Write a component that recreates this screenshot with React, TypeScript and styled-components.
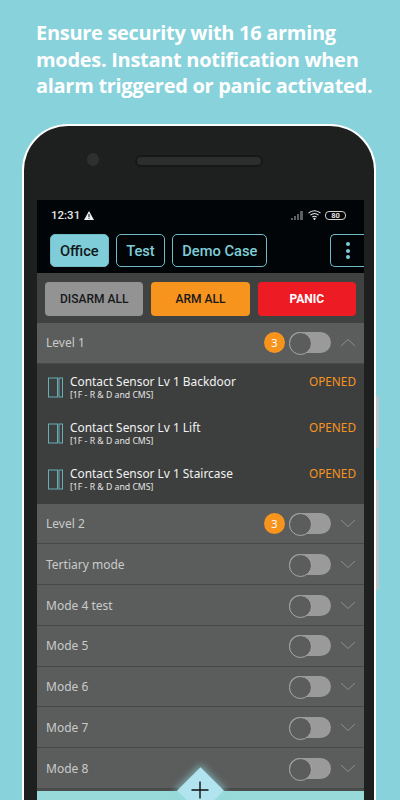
import React from 'react'
import styled, { createGlobalStyle } from 'styled-components'

const GlobalStyle = createGlobalStyle`
    html, body {
        margin: 0;
        padding: 0;
        background-color: #88d2dc;
    }
    * {
        box-sizing: border-box;
    }
`

const Page = styled.div`
    width: 400px;
    height: 800px;
    overflow: hidden;
    display: flex;
    flex-direction: column;
    background-color: #88d2dc;
`

const Headline = styled.h1`
    margin: 0;
    padding: 20px 0 24.5px 36px;
    font-family: "Open Sans", sans-serif;
    font-size: 20px;
    font-weight: 700;
    letter-spacing: -0.3px;
    line-height: 26.5px;
    color: #fff;
    white-space: nowrap;
`

const Phone = styled.div`
    position: relative;
    flex: 1;
    min-height: 0;
    width: 354px;
    margin-left: 22px;
    padding: 0 10px 0 13px;
    display: flex;
    flex-direction: column;
    background-color: #1e2020;
    border: 2px solid #fff;
    border-bottom: 0;
    border-radius: 46px 46px 0 0;
`

const SideKey = styled.div<{ $top: number; $height: number }>`
    position: absolute;
    right: -5px;
    top: ${(p) => p.$top}px;
    width: 3px;
    height: ${(p) => p.$height}px;
    background-color: #bcc6c9;
`

const Earpiece = styled.div`
    height: 74px;
    flex-shrink: 0;
    display: flex;
    align-items: flex-start;
    padding: 26px 0 0 50px;
    gap: 36px;
`

const Camera = styled.div`
    width: 12px;
    height: 13px;
    margin-top: 1px;
    border-radius: 50%;
    background-color: #2e3030;
`

const Speaker = styled.div`
    width: 128px;
    height: 12px;
    margin-top: 3px;
    border-radius: 6px;
    background-color: #2c2e2e;
    border: 2px solid #161818;
`

const Screen = styled.div`
    position: relative;
    flex: 1;
    min-height: 0;
    display: flex;
    flex-direction: column;
    background-color: #020507;
    overflow: hidden;
`

const StatusBar = styled.div`
    height: 34px;
    flex-shrink: 0;
    padding: 0 18px 4px 14px;
    display: flex;
    align-items: center;
    justify-content: space-between;
`

const StatusGroup = styled.div`
    display: flex;
    align-items: center;
    gap: 4px;
`

const Clock = styled.span`
    font-family: Roboto, sans-serif;
    font-size: 11.5px;
    font-weight: 500;
    color: #e2e2e2;
`

const Battery = styled.span`
    width: 21px;
    height: 9px;
    display: flex;
    align-items: center;
    justify-content: center;
    border: 1px solid #cfcfcf;
    border-radius: 4px;
    font-family: Roboto, sans-serif;
    font-size: 7.5px;
    font-weight: 700;
    color: #e2e2e2;
`

const TabBar = styled.div`
    height: 33px;
    flex-shrink: 0;
    padding-left: 13px;
    display: flex;
    gap: 7.7px;
`

const Tab = styled.div<{ $active?: boolean }>`
    height: 33px;
    padding: 0 8.9px;
    display: flex;
    align-items: center;
    border: 1px solid #6fbcc6;
    border-radius: 5px;
    background-color: ${(p) => (p.$active ? '#7fcdd8' : 'transparent')};
    color: ${(p) => (p.$active ? '#10181a' : '#7fcdd8')};
    font-family: Roboto, sans-serif;
    font-size: 14.7px;
    font-weight: 500;
`

const MoreTab = styled(Tab)`
    margin-left: auto;
    width: 34px;
    padding: 0;
    flex-direction: column;
    justify-content: center;
    gap: 2.5px;
    border-radius: 5px 0 0 5px;
    border-right: 0;
`

const Dot = styled.span`
    width: 4px;
    height: 4px;
    border-radius: 50%;
    background-color: #7fcdd8;
`

const Toolbar = styled.div`
    margin-top: 6px;
    height: 50px;
    flex-shrink: 0;
    padding: 9px 8px 7px;
    display: grid;
    grid-template-columns: repeat(3, 1fr);
    gap: 8px;
    background-color: #3f4241;
`

const ActionButton = styled.div<{ $bg: string; $color: string; $bold?: boolean }>`
    display: flex;
    align-items: center;
    justify-content: center;
    border-radius: 4px;
    background-color: ${(p) => p.$bg};
    color: ${(p) => p.$color};
    font-family: Roboto, sans-serif;
    font-size: 12px;
    font-weight: ${(p) => (p.$bold ? 700 : 500)};
`

const ModeRow = styled.div`
    height: 40.75px;
    flex-shrink: 0;
    padding: 0 8px 0 9px;
    display: flex;
    align-items: center;
    background-color: #5b5d5c;
    border-bottom: 1px solid #474948;
`

const ModeName = styled.span`
    flex: 1;
    font-family: "Noto Sans", sans-serif;
    font-size: 12px;
    color: #c9cbca;
`

const Badge = styled.span`
    width: 21px;
    height: 21px;
    margin-right: 4px;
    display: flex;
    align-items: center;
    justify-content: center;
    border-radius: 50%;
    background-color: #f7941e;
    color: #fff;
    font-family: "Noto Sans", sans-serif;
    font-size: 11px;
`

const Toggle = styled.span`
    position: relative;
    width: 42px;
    height: 21px;
    margin-right: 9px;
    border-radius: 11px;
    background-color: #9a9a9a;
    &::before {
        content: '';
        position: absolute;
        left: 0;
        top: 0;
        width: 21px;
        height: 21px;
        border-radius: 50%;
        background-color: #5b5d5c;
        border: 1px solid #a6a6a6;
    }
`

const SensorList = styled.div`
    flex-shrink: 0;
    padding-top: 1px;
    background-color: #3d3f3e;
`

const SensorRow = styled.div`
    height: 46.3px;
    padding: 8px 8px 0 11px;
    display: flex;
    align-items: flex-start;
`

const SensorIconWrap = styled.div`
    margin-top: 4px;
    line-height: 0;
`

const SensorInfo = styled.div`
    flex: 1;
    margin-left: 7px;
    display: flex;
    flex-direction: column;
`

const SensorName = styled.span`
    font-family: "Noto Sans", sans-serif;
    font-size: 11.9px;
    line-height: 16px;
    color: #f2f2f2;
`

const SensorPlace = styled.span`
    font-family: "Noto Sans", sans-serif;
    font-size: 8.7px;
    line-height: 12px;
    color: #e4e4e4;
`

const SensorState = styled.span`
    font-family: "Noto Sans", sans-serif;
    font-size: 11.8px;
    line-height: 16px;
    color: #f7941e;
`

const BottomBar = styled.div`
    flex: 1;
    background-color: #98d9d9;
    border-top: 2px solid #4c4e4d;
`

const AddButton = styled.div`
    position: absolute;
    left: 163px;
    top: 590px;
    width: 0;
    height: 0;
`

const Diamond = styled.div`
    position: absolute;
    left: -16.5px;
    top: -16.5px;
    width: 33px;
    height: 33px;
    transform: rotate(45deg);
    background-color: #b2e4ef;
    box-shadow: 0 0 7px 2px rgba(150, 225, 235, 0.55);
`

const PlusIcon = styled.svg`
    position: absolute;
    left: -9px;
    top: -9px;
`

const Chevron = ({ up }: { up?: boolean }) => (
    <svg width="16" height="9" viewBox="0 0 16 9" fill="none" stroke="#8c8e8d" strokeWidth="1">
        <path d={up ? 'M1 8 L8 1.5 L15 8' : 'M1 1 L8 7.5 L15 1'} />
    </svg>
)

const SensorIcon = () => (
    <SensorIconWrap>
        <svg width="15" height="21" viewBox="0 0 15 21" fill="none" stroke="#68b0b8" strokeWidth="1">
            <rect x="0.5" y="1" width="9" height="19" />
            <rect x="11" y="1" width="3.5" height="19" />
        </svg>
    </SensorIconWrap>
)

const modes = [
    { name: 'Level 2', count: 3 },
    { name: 'Tertiary mode' },
    { name: 'Mode 4 test' },
    { name: 'Mode 5' },
    { name: 'Mode 6' },
    { name: 'Mode 7' },
    { name: 'Mode 8' },
]

const sensors = ['Contact Sensor Lv 1 Backdoor', 'Contact Sensor Lv 1 Lift', 'Contact Sensor Lv 1 Staircase']

const App = () => (
    <Page>
        <GlobalStyle />
        <Headline>
            Ensure security with 16 arming
            <br />
            modes. Instant notification when
            <br />
            alarm triggered or panic activated.
        </Headline>
        <Phone>
            <SideKey $top={270} $height={52} />
            <SideKey $top={354} $height={110} />
            <Earpiece>
                <Camera />
                <Speaker />
            </Earpiece>
            <Screen>
                <StatusBar>
                    <StatusGroup>
                        <Clock>12:31</Clock>
                        <svg width="10" height="9" viewBox="0 0 10 9">
                            <path d="M5 0 L10 9 H0 Z" fill="#efefef" />
                            <path d="M4.5 3h1v3h-1zM4.5 6.8h1v1h-1z" fill="#020507" />
                        </svg>
                    </StatusGroup>
                    <StatusGroup>
                        <svg width="13" height="10" viewBox="0 0 13 10" fill="#5e5e5e">
                            <path d="M0 8h2v2H0zM3 6h2v4H3zM6 4h2v6H6zM9 1h3v9H9z" />
                        </svg>
                        <svg width="13" height="10" viewBox="0 0 13 10" fill="none" stroke="#e8e8e8" strokeWidth="1.1">
                            <path d="M0.5 3.2 C4 0 9 0 12.5 3.2" />
                            <path d="M2.4 5.2 C5 3 8 3 10.6 5.2" />
                            <path d="M4.3 7.1 C5.7 6 7.3 6 8.7 7.1" />
                            <circle cx="6.5" cy="8.8" r="0.6" fill="#e8e8e8" />
                        </svg>
                        <Battery>80</Battery>
                    </StatusGroup>
                </StatusBar>
                <TabBar>
                    <Tab $active>Office</Tab>
                    <Tab>Test</Tab>
                    <Tab>Demo Case</Tab>
                    <MoreTab>
                        <Dot />
                        <Dot />
                        <Dot />
                    </MoreTab>
                </TabBar>
                <Toolbar>
                    <ActionButton $bg="#939393" $color="#16181a">DISARM ALL</ActionButton>
                    <ActionButton $bg="#f7941e" $color="#16181a">ARM ALL</ActionButton>
                    <ActionButton $bg="#ed1c24" $color="#fff" $bold>PANIC</ActionButton>
                </Toolbar>
                <ModeRow>
                    <ModeName>Level 1</ModeName>
                    <Badge>3</Badge>
                    <Toggle />
                    <Chevron up />
                </ModeRow>
                <SensorList>
                    {sensors.map((name) => (
                        <SensorRow key={name}>
                            <SensorIcon />
                            <SensorInfo>
                                <SensorName>{name}</SensorName>
                                <SensorPlace>[1F - R &amp; D and CMS]</SensorPlace>
                            </SensorInfo>
                            <SensorState>OPENED</SensorState>
                        </SensorRow>
                    ))}
                </SensorList>
                {modes.map((mode) => (
                    <ModeRow key={mode.name}>
                        <ModeName>{mode.name}</ModeName>
                        {mode.count && <Badge>{mode.count}</Badge>}
                        <Toggle />
                        <Chevron />
                    </ModeRow>
                ))}
                <BottomBar />
                <AddButton>
                    <Diamond />
                    <PlusIcon width="18" height="18" viewBox="0 0 18 18" stroke="#111" strokeWidth="1.4">
                        <path d="M9 0.5 V17.5 M0.5 9 H17.5" />
                    </PlusIcon>
                </AddButton>
            </Screen>
        </Phone>
    </Page>
)

export default App
